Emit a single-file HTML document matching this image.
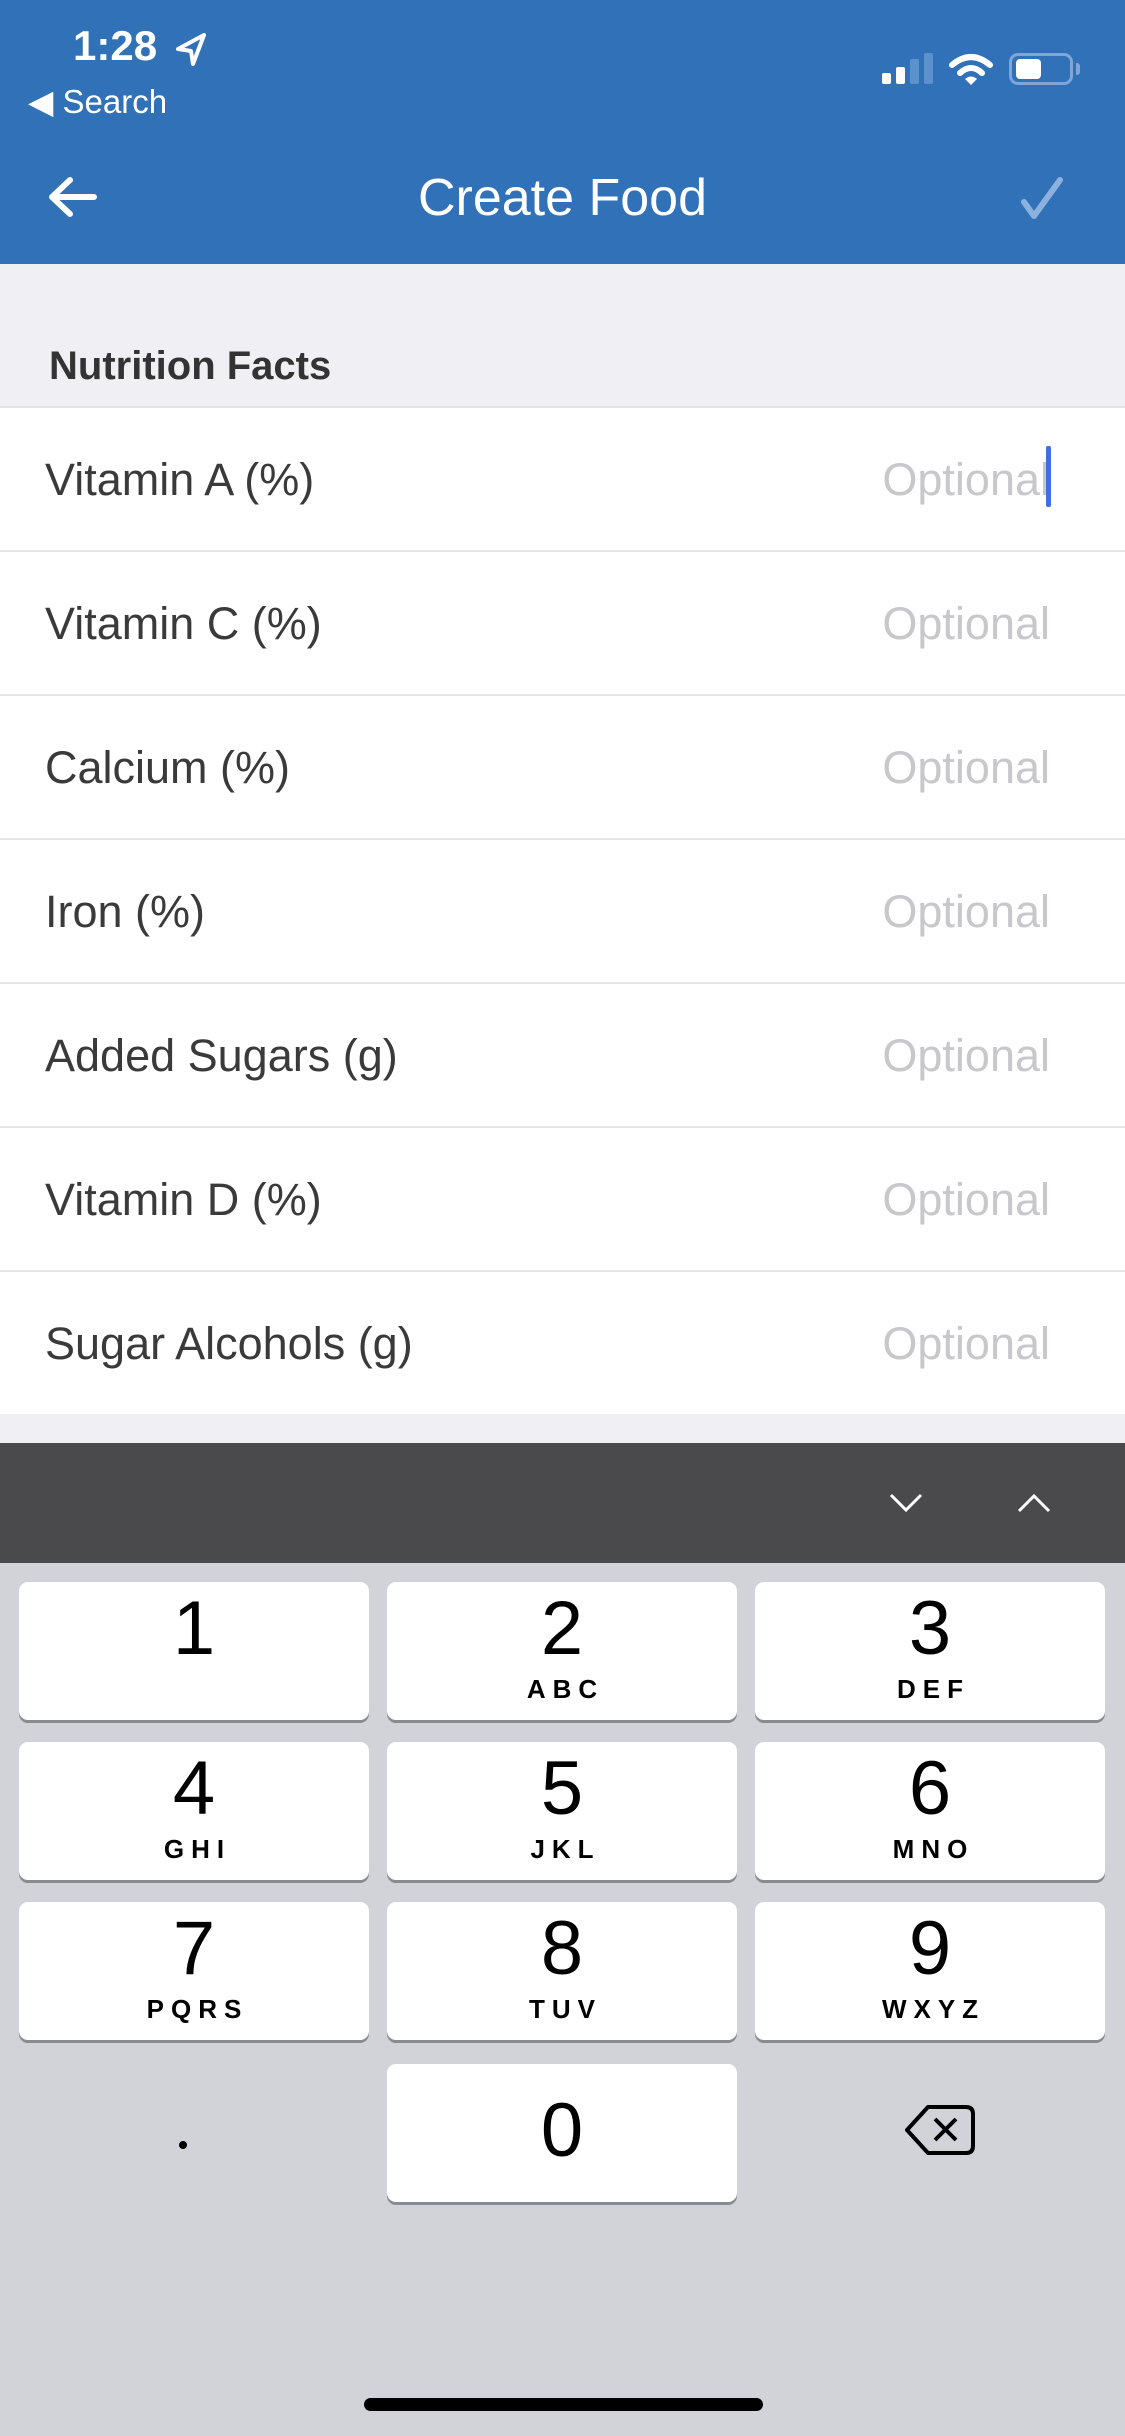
<!DOCTYPE html>
<html><head><meta charset="utf-8"><style>
*{margin:0;padding:0;box-sizing:border-box}
body{width:1125px;height:2436px;position:relative;background:#efeff4;font-family:"Liberation Sans",sans-serif;overflow:hidden}
.abs{position:absolute}
.hdr{left:0;top:0;width:1125px;height:264px;background:#3171b8}
.row{left:0;width:1125px;height:144px;background:#fff;border-bottom:2px solid #e6e6ea}
.lbl{position:absolute;left:45px;top:0;line-height:144px;font-size:45px;color:#3a3a3a}
.opt{position:absolute;right:75px;top:0;line-height:144px;font-size:45px;color:#c7c7cc}
.kb{left:0;top:1563px;width:1125px;height:873px;background:#d1d3d9}
.key{position:absolute;width:350px;height:138px;background:#fff;border-radius:9px;box-shadow:0 3px 0 #888b90;text-align:center}
.d{position:absolute;left:0;right:0;top:2px;font-size:76px;line-height:90px;color:#000}
.l{position:absolute;left:0;right:0;top:92px;font-size:26px;font-weight:bold;letter-spacing:7px;padding-left:7px;color:#000}
</style></head><body>
<div class="abs hdr"></div>
<div class="abs" style="left:73px;top:22px;font-size:42px;font-weight:bold;color:#fff">1:28</div>
<svg class="abs" style="left:174px;top:32px" width="34" height="36" viewBox="0 0 34 36"><path d="M30 3 L4 17 L17 19 L19 32 Z" fill="none" stroke="#fff" stroke-width="4" stroke-linejoin="round"/></svg>
<div class="abs" style="left:28px;top:82px;font-size:33px;color:#fff">◀ Search</div>
<div class="abs" style="left:882px;top:73px;width:9px;height:11px;background:#fff;border-radius:2px"></div>
<div class="abs" style="left:896px;top:67px;width:9px;height:17px;background:#fff;border-radius:2px"></div>
<div class="abs" style="left:910px;top:59px;width:9px;height:25px;background:#5b92cc;border-radius:2px"></div>
<div class="abs" style="left:924px;top:53px;width:9px;height:31px;background:#5b92cc;border-radius:2px"></div>
<svg class="abs" style="left:948px;top:52px" width="46" height="34" viewBox="0 0 46 34"><path d="M4 13 Q23 -3 42 13" fill="none" stroke="#fff" stroke-width="6" stroke-linecap="round"/><path d="M12 21 Q23 11 34 21" fill="none" stroke="#fff" stroke-width="6" stroke-linecap="round"/><path d="M17 27 L23 33 L29 27 Q23 22 17 27 Z" fill="#fff"/></svg>
<div class="abs" style="left:1009px;top:53px;width:64px;height:32px;border:3px solid #7ea6d6;border-radius:9px"></div>
<div class="abs" style="left:1016px;top:59px;width:25px;height:20px;background:#fff;border-radius:4px"></div>
<div class="abs" style="left:1076px;top:63px;width:4px;height:12px;background:#7ea6d6;border-radius:0 3px 3px 0"></div>
<svg class="abs" style="left:46px;top:175px" width="52" height="44" viewBox="0 0 52 44"><path d="M48 22 H8 M24 5 L6 22 L24 39" fill="none" stroke="#fff" stroke-width="6" stroke-linecap="round" stroke-linejoin="round"/></svg>
<div class="abs" style="left:0;width:1125px;top:168px;text-align:center;font-size:52px;color:#fff;line-height:60px">Create Food</div>
<svg class="abs" style="left:1018px;top:176px" width="48" height="46" viewBox="0 0 48 46"><path d="M6 26 L16 40 L42 4" fill="none" stroke="#8db1de" stroke-width="6" stroke-linecap="round" stroke-linejoin="round"/></svg>
<div class="abs" style="left:0;top:264px;width:1125px;height:144px;background:#efeff4;border-bottom:2px solid #e2e2e6"></div>
<div class="abs" style="left:49px;top:344px;font-size:40px;font-weight:bold;color:#333">Nutrition Facts</div>
<div class="abs row" style="top:408px"><span class="lbl">Vitamin A (%)</span><span class="opt">Optional</span></div>
<div class="abs" style="left:1046px;top:446px;width:5px;height:61px;background:#3f6fe0;border-radius:2px"></div>
<div class="abs row" style="top:552px"><span class="lbl">Vitamin C (%)</span><span class="opt">Optional</span></div>
<div class="abs row" style="top:696px"><span class="lbl">Calcium (%)</span><span class="opt">Optional</span></div>
<div class="abs row" style="top:840px"><span class="lbl">Iron (%)</span><span class="opt">Optional</span></div>
<div class="abs row" style="top:984px"><span class="lbl">Added Sugars (g)</span><span class="opt">Optional</span></div>
<div class="abs row" style="top:1128px"><span class="lbl">Vitamin D (%)</span><span class="opt">Optional</span></div>
<div class="abs row" style="top:1272px;border-bottom:none;height:142px"><span class="lbl">Sugar Alcohols (g)</span><span class="opt">Optional</span></div>
<div class="abs" style="left:0;top:1443px;width:1125px;height:120px;background:#4a4a4c"></div>
<svg class="abs" style="left:886px;top:1490px" width="40" height="26" viewBox="0 0 40 26"><path d="M5 5 L20 20 L35 5" fill="none" stroke="#fff" stroke-width="3"/></svg>
<svg class="abs" style="left:1014px;top:1490px" width="40" height="26" viewBox="0 0 40 26"><path d="M5 21 L20 6 L35 21" fill="none" stroke="#fff" stroke-width="3"/></svg>
<div class="abs kb">
<div class="key" style="left:19px;top:19px"><div class="d">1</div></div>
<div class="key" style="left:387px;top:19px"><div class="d">2</div><div class="l">ABC</div></div>
<div class="key" style="left:755px;top:19px"><div class="d">3</div><div class="l">DEF</div></div>
<div class="key" style="left:19px;top:179px"><div class="d">4</div><div class="l">GHI</div></div>
<div class="key" style="left:387px;top:179px"><div class="d">5</div><div class="l">JKL</div></div>
<div class="key" style="left:755px;top:179px"><div class="d">6</div><div class="l">MNO</div></div>
<div class="key" style="left:19px;top:339px"><div class="d">7</div><div class="l">PQRS</div></div>
<div class="key" style="left:387px;top:339px"><div class="d">8</div><div class="l">TUV</div></div>
<div class="key" style="left:755px;top:339px"><div class="d">9</div><div class="l">WXYZ</div></div>
<div class="key" style="left:387px;top:501px"><div class="d" style="top:22px">0</div></div>
<div class="abs" style="left:179px;top:578px;width:8px;height:8px;background:#000;border-radius:50%"></div>
<svg class="abs" style="left:904px;top:541px" width="72" height="52" viewBox="0 0 72 52"><path d="M24 3 H62 Q69 3 69 10 V42 Q69 49 62 49 H24 L3 26 Z" fill="none" stroke="#000" stroke-width="4" stroke-linejoin="round"/><path d="M31 15 L52 36 M52 15 L31 36" stroke="#000" stroke-width="4"/></svg>
<div class="abs" style="left:364px;top:835px;width:399px;height:13px;background:#000;border-radius:7px"></div>
</div>
</body></html>
